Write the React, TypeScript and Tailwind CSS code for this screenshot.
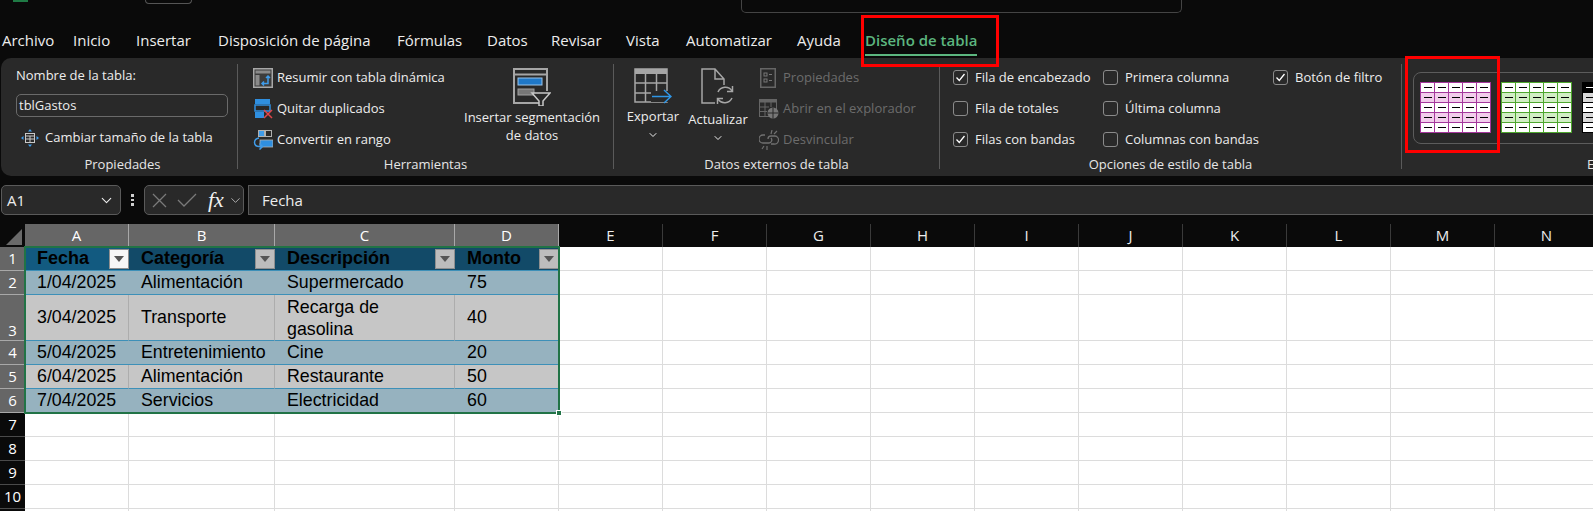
import React from "react";
import { ChevronDown } from "lucide-react";

const uiFont = "font-['Open_Sans','Noto_Sans',sans-serif]";

const tabs = [
  { label: "Archivo", cls: "w-[71px]" },
  { label: "Inicio", cls: "w-[63px]" },
  { label: "Insertar", cls: "w-[82px]" },
  { label: "Disposición de página", cls: "w-[179px]" },
  { label: "Fórmulas", cls: "w-[90px]" },
  { label: "Datos", cls: "w-[64px]" },
  { label: "Revisar", cls: "w-[75px]" },
  { label: "Vista", cls: "w-[60px]" },
  { label: "Automatizar", cls: "w-[111px]" },
  { label: "Ayuda", cls: "w-[68px]" },
];

const PivotIcon = () => (
  <svg width="20" height="20" viewBox="0 0 20 20" fill="none">
    <rect x="0.750" y="0.750" width="18.500" height="18.500" fill="#3c3c3c" stroke="#a8a8a8" strokeWidth="1.500" />
    <rect x="2.500" y="2.500" width="15" height="3" fill="#8a8a8a" />
    <rect x="2.500" y="7" width="4" height="10.500" fill="#8a8a8a" />
    <path d="M15 8v7.500H9M11 13.500l-2 2 2 2M13 10l2-2 2 2" stroke="#3f9be8" strokeWidth="1.500" />
  </svg>
);

const DuplicatesIcon = () => (
  <svg width="20" height="20" viewBox="0 0 20 20" fill="none">
    <rect x="2" y="0" width="15" height="5" fill="#2f8fe0" />
    <rect x="2" y="6" width="15" height="6" fill="#292929" stroke="#2f8fe0" strokeWidth="1.500" />
    <rect x="2" y="13" width="9" height="6" fill="#2f8fe0" />
    <path d="M11 11l8 8M19 11l-8 8" stroke="#e2454a" strokeWidth="1.500" />
  </svg>
);

const ConvertIcon = () => (
  <svg width="20" height="20" viewBox="0 0 20 20" fill="none">
    <rect x="5.500" y="0.500" width="6" height="6" fill="#3f9be8" stroke="#b0b0b0" />
    <rect x="12.500" y="0.500" width="6" height="6" stroke="#b0b0b0" />
    <rect x="7" y="10" width="13" height="7" fill="#2f8fe0" stroke="#b0b0b0" strokeWidth="0.800" />
    <path d="M6 8C0 9 0 16 6 16.500h3M6.500 13.500l3 3-3 3" stroke="#3f9be8" strokeWidth="1.500" />
  </svg>
);

const ResizeIcon = () => (
  <svg width="18" height="18" viewBox="0 0 18 18" fill="none">
    <rect x="4.500" y="4.500" width="9" height="9" stroke="#c8c8c8" />
    <path d="M4.500 7h9M4.500 10h9M9 7v6.500" stroke="#c8c8c8" />
    <path d="M9 0l2 2.500H7zM9 18l2-2.500H7zM0 9l2.500-2v4zM18 9l-2.500-2v4z" fill="#3f9be8" />
  </svg>
);

const SlicerIcon = () => (
  <svg width="38" height="38" viewBox="0 0 38 38" fill="none">
    <path d="M27 35H1V1h33v22" stroke="#a6a6a6" strokeWidth="2" />
    <path d="M1 6.500h33" stroke="#a6a6a6" strokeWidth="2" />
    <rect x="5" y="10" width="24" height="7" fill="#1f78c8" stroke="#9cc4e8" />
    <rect x="5" y="21" width="16" height="6" fill="#777" stroke="#a0a0a0" />
    <path d="M19 25h18l-7 8v5h-4v-5z" fill="#292929" stroke="#c8c8c8" strokeWidth="1.500" />
  </svg>
);

const ExportIcon = () => (
  <svg width="38" height="36" viewBox="0 0 38 36" fill="none">
    <rect x="1" y="1" width="32" height="33" stroke="#a6a6a6" strokeWidth="1.500" />
    <rect x="1" y="1" width="32" height="5" fill="#a6a6a6" />
    <path d="M1 15h32M1 25h32M11.500 6v28M22.500 6v28" stroke="#a6a6a6" strokeWidth="1.500" />
    <rect x="17" y="23" width="20" height="11" fill="#292929" />
    <path d="M18 28.500h18M30 22l7 6.500-7 6.500" stroke="#2f96e6" strokeWidth="1.500" />
  </svg>
);

const RefreshIcon = () => (
  <svg width="34" height="37" viewBox="0 0 34 37" fill="none">
    <path d="M14 35H1V1h13l9 10v6M14 1v10h9" stroke="#a6a6a6" strokeWidth="1.500" />
    <path d="M17 24a8 8 0 0 1 14-1M31 30a8 8 0 0 1-14 1" stroke="#a6a6a6" strokeWidth="1.500" />
    <path d="M31.500 18v5.500H26M16.500 36v-5.500H22" stroke="#a6a6a6" strokeWidth="1.500" />
  </svg>
);

const PropsIcon = () => (
  <svg width="20" height="20" viewBox="0 0 20 20" fill="none">
    <rect x="1.750" y="0.750" width="14.500" height="18.500" stroke="#666" strokeWidth="1.500" />
    <rect x="5" y="5" width="3" height="3" stroke="#777" />
    <rect x="5" y="11" width="3" height="3" stroke="#777" />
    <path d="M10 6.500h3M10 12.500h3" stroke="#777" />
  </svg>
);

const BrowserIcon = () => (
  <svg width="20" height="20" viewBox="0 0 20 20" fill="none">
    <rect x="0.500" y="0.500" width="17" height="17" stroke="#666" />
    <rect x="0.500" y="0.500" width="17" height="3" fill="#666" />
    <path d="M0 8h10M0 12.500h8M6 3v15M12 3v5" stroke="#666" />
    <circle cx="14" cy="14" r="5.500" fill="#777" />
    <path d="M8.500 14h11M14 8.500v11" stroke="#292929" />
  </svg>
);

const UnlinkIcon = () => (
  <svg width="20" height="20" viewBox="0 0 20 20" fill="none">
    <path d="M6 5H4a4 4 0 0 0 0 8h6a3 3 0 0 0 2-5M12 14h3a4 4 0 0 0 1-8h-4a3 3 0 0 0-3 3" stroke="#707070" strokeWidth="1.300" />
    <path d="M12 4l1-4M15 4l3-3M5 16l-2 3M8 16v4" stroke="#707070" strokeWidth="1.200" />
  </svg>
);

const Separator = () => <div className="w-px h-[105px] mt-[6px] bg-[#5a5a5a] shrink-0" />;

const GroupLabel = ({ children }: { children: React.ReactNode }) => (
  <div className="h-[24px] shrink-0 text-center text-[#e6e6e6] leading-[24px]">{children}</div>
);

const ActionRow = ({ icon, label, disabled }: { icon: React.ReactNode; label: string; disabled?: boolean }) => (
  <div className={`flex items-center h-[31px] ${disabled ? "text-[#6c6c6c]" : "text-[#ededed]"}`}>
    <div className="w-[24px] shrink-0 flex items-center">{icon}</div>
    <span className="whitespace-nowrap">{label}</span>
  </div>
);

const Check = ({ label, checked, cls }: { label: string; checked?: boolean; cls?: string }) => (
  <div className={`flex items-center gap-[7px] h-[31px] text-[#ededed] whitespace-nowrap ${cls ?? ""}`}>
    <span className="w-[15px] h-[15px] rounded-[3px] border border-[#8a8a8a] flex items-center justify-center shrink-0">
      {checked && (
        <svg width="11" height="11" viewBox="0 0 11 11" fill="none">
          <path d="M1.500 5.500l2.800 3 5.200-6.500" stroke="#ffffff" strokeWidth="1.300" />
        </svg>
      )}
    </span>
    <span>{label}</span>
  </div>
);

const TableThumb = ({ border, band, head, cls }: { border: string; band: string; head?: boolean; cls: string }) => (
  <div className={`grid grid-cols-5 grid-rows-5 w-[71px] h-[51px] shrink-0 border gap-px ${border} ${cls}`}>
    {Array.from({ length: 25 }).map((_, i) => {
      const r = Math.floor(i / 5);
      const isHead = head && r === 0;
      return (
        <div key={i} className={`flex items-center justify-center ${isHead ? "bg-black" : r % 2 === 1 ? band : "bg-white"}`}>
          <div className={`w-[8px] h-[1.500px] ${isHead ? "bg-white" : "bg-black"}`} />
        </div>
      );
    })}
  </div>
);

const Ribbon = () => (
  <div className="flex h-[118px] ml-px bg-[#292929] rounded-l-[10px] text-[13px] overflow-hidden">
    <div className="w-[236px] shrink-0 flex flex-col pl-[15px] pr-[8px]">
      <div className="h-[39px] flex items-center text-[#ededed]">Nombre de la tabla:</div>
      <div className="h-[25px] w-[212px] rounded-[5px] border border-[#6a6a6a] pl-[2px] flex items-center text-[#ededed]">tblGastos</div>
      <div className="h-[31px] mt-[6px] flex items-center pl-[5px] gap-[6px] text-[#ededed]">
        <ResizeIcon />
        <span className="whitespace-nowrap">Cambiar tamaño de la tabla</span>
      </div>
      <div className="flex-1 min-h-0" />
      <GroupLabel>Propiedades</GroupLabel>
    </div>
    <Separator />
    <div className="w-[375px] shrink-0 flex flex-col">
      <div className="flex flex-1 min-h-0 pt-[4px]">
        <div className="w-[213px] pl-[15px] shrink-0">
          <ActionRow icon={<PivotIcon />} label="Resumir con tabla dinámica" />
          <ActionRow icon={<DuplicatesIcon />} label="Quitar duplicados" />
          <ActionRow icon={<ConvertIcon />} label="Convertir en rango" />
        </div>
        <div className="flex-1 flex flex-col items-center pt-[6px] text-center text-[#ededed] leading-[18px]">
          <SlicerIcon />
          <div className="mt-[2px]">Insertar segmentación<br />de datos</div>
        </div>
      </div>
      <GroupLabel>Herramientas</GroupLabel>
    </div>
    <Separator />
    <div className="w-[325px] shrink-0 flex flex-col">
      <div className="flex flex-1 min-h-0">
        <div className="w-[78px] shrink-0 flex flex-col items-center pt-[10px] text-[#ededed]">
          <ExportIcon />
          <div className="mt-[3px]">Exportar</div>
          <ChevronDown size={12} className="mt-[2px]" />
        </div>
        <div className="w-[52px] shrink-0 flex flex-col items-center pt-[10px] text-[#ededed]">
          <RefreshIcon />
          <div className="mt-[5px]">Actualizar</div>
          <ChevronDown size={12} className="mt-[2px]" />
        </div>
        <div className="pl-[15px] pt-[4px]">
          <ActionRow icon={<PropsIcon />} label="Propiedades" disabled />
          <ActionRow icon={<BrowserIcon />} label="Abrir en el explorador" disabled />
          <ActionRow icon={<UnlinkIcon />} label="Desvincular" disabled />
        </div>
      </div>
      <GroupLabel>Datos externos de tabla</GroupLabel>
    </div>
    <Separator />
    <div className="w-[461px] shrink-0 flex flex-col">
      <div className="flex flex-1 min-h-0 pt-[4px] pl-[13px]">
        <div className="w-[150px] shrink-0">
          <Check label="Fila de encabezado" checked />
          <Check label="Fila de totales" />
          <Check label="Filas con bandas" checked />
        </div>
        <div className="w-[170px] shrink-0">
          <Check label="Primera columna" />
          <Check label="Última columna" />
          <Check label="Columnas con bandas" />
        </div>
        <Check label="Botón de filtro" checked />
      </div>
      <GroupLabel>Opciones de estilo de tabla</GroupLabel>
    </div>
    <Separator />
    <div className="flex-1 flex flex-col min-w-0 pl-[11px]">
      <div className="flex-1 min-h-0 pt-[14px]">
        <div className="flex h-[72px] w-[240px] rounded-l-[8px] border border-[#5c5c5c] pl-[6px] pt-[9px] gap-[10px]">
          <TableThumb border="border-[#a4379c]" band="bg-[#f2cdec]" cls="bg-[#a4379c]" />
          <TableThumb border="border-[#4ea72e]" band="bg-[#d1eec4]" cls="bg-[#4ea72e]" />
          <TableThumb border="border-black" band="bg-[#d9d9d9]" head cls="bg-black" />
        </div>
      </div>
      <div className="h-[24px] shrink-0 leading-[24px] pl-[174px] text-[#e6e6e6] whitespace-nowrap">E</div>
    </div>
  </div>
);

const FormulaBar = () => (
  <div className="flex h-[30px] mt-[9px] text-[#ededed]">
    <div className="w-[120px] ml-px shrink-0 bg-[#292929] border border-[#5a5a5a] rounded-[5px] flex items-center justify-between pl-[5px] pr-[5px] text-[15px]">
      <span>A1</span>
      <ChevronDown size={17} strokeWidth={1.500} />
    </div>
    <div className="w-[23px] shrink-0 flex flex-col items-center justify-center gap-[2px]">
      <span className="w-[2.500px] h-[2.500px] bg-[#d0d0d0]" />
      <span className="w-[2.500px] h-[2.500px] bg-[#d0d0d0]" />
      <span className="w-[2.500px] h-[2.500px] bg-[#d0d0d0]" />
    </div>
    <div className="w-[100px] shrink-0 bg-[#292929] border border-[#5a5a5a] rounded-[5px] flex items-center pl-[7px]">
      <svg width="15" height="15" viewBox="0 0 15 15" fill="none"><path d="M1 1l13 13M14 1L1 14" stroke="#7a7a7a" strokeWidth="1.300" /></svg>
      <svg width="20" height="14" viewBox="0 0 20 14" fill="none" className="ml-[10px]"><path d="M1 7l6 6L19 1" stroke="#7a7a7a" strokeWidth="1.300" /></svg>
      <span className="font-['Liberation_Serif',serif] italic text-[22px] leading-none ml-[11px] w-[18px] text-[#f0f0f0]">fx</span>
      <ChevronDown size={15} strokeWidth={1.300} className="ml-[2px] text-[#c8c8c8]" />
    </div>
    <div className="flex-1 ml-[4px] bg-[#292929] border border-[#5a5a5a] border-r-0 flex items-center pl-[13px] text-[15px]">Fecha</div>
  </div>
);

const columns = ["A", "B", "C", "D", "E", "F", "G", "H", "I", "J", "K", "L", "M", "N"];

type RowData = { n: number; cells: React.ReactNode[]; band: "blue" | "gray"; tall?: boolean };

const rows: RowData[] = [
  { n: 2, cells: ["1/04/2025", "Alimentación", "Supermercado", "75"], band: "blue" },
  { n: 3, cells: ["3/04/2025", "Transporte", <span key="r" className="block leading-[22px]">Recarga de<br />gasolina</span>, "40"], band: "gray", tall: true },
  { n: 4, cells: ["5/04/2025", "Entretenimiento", "Cine", "20"], band: "blue" },
  { n: 5, cells: ["6/04/2025", "Alimentación", "Restaurante", "50"], band: "gray" },
  { n: 6, cells: ["7/04/2025", "Servicios", "Electricidad", "60"], band: "blue" },
];

const headers = ["Fecha", "Categoría", "Descripción", "Monto"];

const RowHead = ({ n, active, tall }: { n: number; active: boolean; tall?: boolean }) => (
  <div className={`flex justify-center text-[15px] leading-none text-white border-b ${tall ? "items-end pb-[2px]" : "items-center"} ${active ? "bg-[#666666] border-[#a8a8a8]" : "bg-[#0a0a0a] border-[#4a4a4a]"} ${uiFont}`}>{n}</div>
);

const Sheet = () => (
  <div className="relative mt-[9px] grid grid-cols-[25px_104px_146px_180px_repeat(11,104px)] grid-rows-[23px_24px_24px_46px_repeat(8,24px)] text-[17.800px] text-black font-['Liberation_Sans',Arial,sans-serif]">
    <div className="bg-[#0a0a0a] flex items-end justify-end pr-[3px] pb-[2px]">
      <div className="w-0 h-0 border-l-[16px] border-l-transparent border-b-[16px] border-b-[#6a6a6a]" />
    </div>
    {columns.map((c, i) => (
      <div key={c} className={`flex items-center justify-center text-[15px] border-r ${uiFont} ${i < 4 ? "bg-[#666666] text-white border-[#a8a8a8]" : "bg-[#0a0a0a] text-[#ededed] border-[#3a3a3a]"}`}>{c}</div>
    ))}

    <RowHead n={1} active />
    {headers.map((h, i) => (
      <div key={h} className={`flex items-center justify-between pl-[12px] font-bold text-[18px] border-b border-[#3d90b8] ${i === 0 ? "bg-[#125a80]" : "bg-[#124a68]"}`}>
        <span>{h}</span>
        <span className={`w-[20px] h-[20px] border border-[#8f8f8f] flex items-center justify-center ${i === 0 ? "bg-[#f7f7f7]" : "bg-[#bdbdbd]"}`}>
          <span className="w-0 h-0 border-x-[5px] border-x-transparent border-t-[6px] border-t-[#555555]" />
        </span>
      </div>
    ))}
    {Array.from({ length: 10 }).map((_, i) => <div key={i} className="bg-white border-r border-b border-[#dcdcdc]" />)}

    {rows.map(r => (
      <React.Fragment key={r.n}>
        <RowHead n={r.n} active tall={r.tall} />
        {r.cells.map((c, i) => (
          <div key={i} className={`flex items-center pl-[12px] border-b border-[#3d90b8] ${r.band === "blue" ? "bg-[#96b2bf]" : "bg-[#c6c6c6]"} ${r.band === "gray" && i < 3 ? "border-r border-r-[#adadad]" : ""}`}>{c}</div>
        ))}
        {Array.from({ length: 10 }).map((_, i) => <div key={i} className="bg-white border-r border-b border-[#dcdcdc]" />)}
      </React.Fragment>
    ))}

    {[7, 8, 9, 10].map(n => (
      <React.Fragment key={n}>
        <RowHead n={n} active={false} />
        {columns.map(c => <div key={c} className="bg-white border-r border-b border-[#dcdcdc]" />)}
      </React.Fragment>
    ))}
    <div className="bg-[#0a0a0a]" />
    {columns.map(c => <div key={c} className="bg-white border-r border-[#dcdcdc]" />)}

    {/* selection outline over the table */}
    <div className="absolute left-[24px] top-[22px] w-[536px] h-[168px] border-2 border-[#217346] pointer-events-none">
      <div className="absolute -right-[4px] -bottom-[4px] w-[6px] h-[6px] bg-[#217346] border border-white" />
    </div>
  </div>
);

export default function App() {
  return (
    <div className={`relative w-[1593px] h-[511px] overflow-hidden bg-[#0a0a0a] ${uiFont}`}>
      {/* cut off title bar */}
      <div className="flex h-[26px] items-start">
        <div className="w-[15px] h-[2px] ml-[13px] bg-[#1f7a45]" />
        <div className="w-[47px] h-[4px] ml-[117px] border border-t-0 border-[#555555] rounded-b-[5px]" />
        <div className="w-[441px] h-[13px] ml-[549px] border border-t-0 border-[#444444] rounded-b-[5px]" />
      </div>

      <div className="flex h-[32px] items-center pl-[2px] text-[15px] text-[#ededed]">
        {tabs.map(t => (
          <div key={t.label} className={`shrink-0 whitespace-nowrap pb-[4px] ${t.cls}`}>{t.label}</div>
        ))}
        <div className="relative font-semibold text-[#5cb67f] whitespace-nowrap pb-[4px]">
          Diseño de tabla
          <div className="absolute left-0 right-0 -bottom-[1px] h-[2px] bg-[#5cb67f]" />
        </div>
      </div>

      <Ribbon />
      <FormulaBar />
      <Sheet />

      {/* red annotations drawn on the screenshot */}
      <div className="absolute left-[861px] top-[15px] w-[138px] h-[52px] border-[3px] border-[#ff0000]" />
      <div className="absolute left-[1405px] top-[56px] w-[95px] h-[97px] border-[3px] border-[#ff0000]" />
    </div>
  );
}
